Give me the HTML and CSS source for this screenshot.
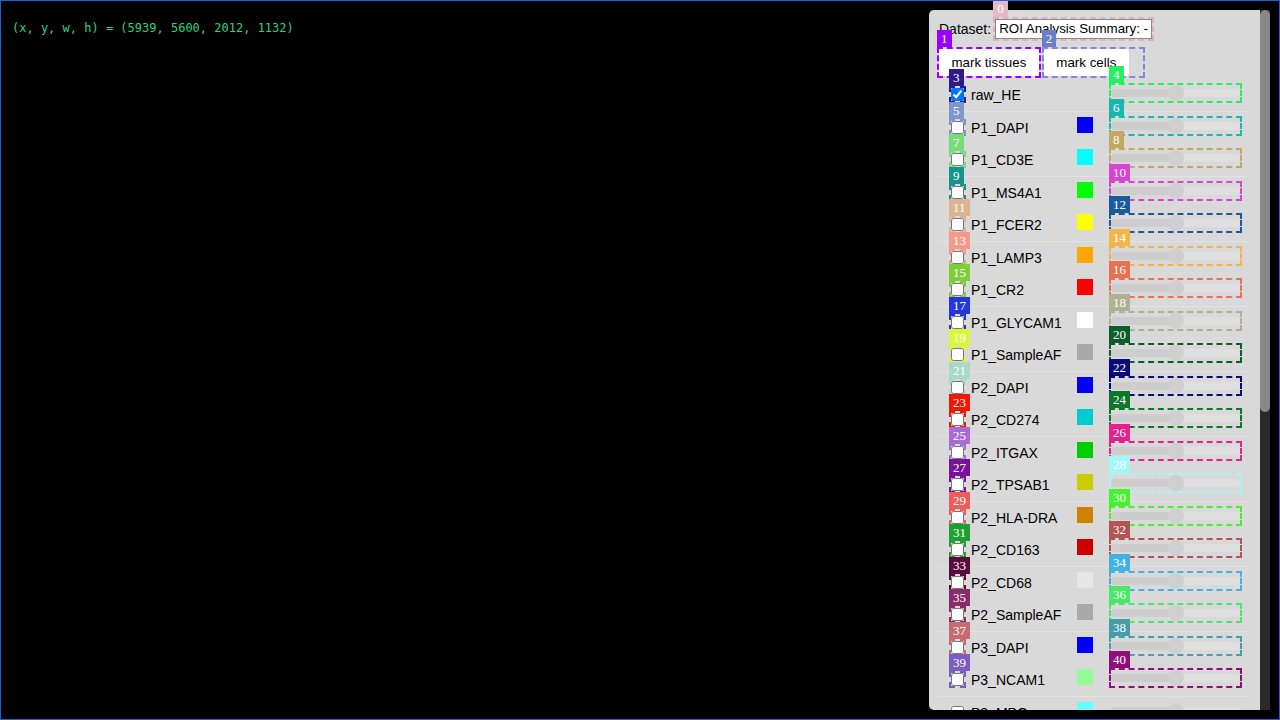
FILE: index.html
```html
<!DOCTYPE html>
<html lang="en">
<head>
<meta charset="utf-8">
<title>ROI viewer</title>
<link rel="stylesheet" href="styles.css">
</head>
<body>
<div class="screen">
  <div class="coords">(x, y, w, h) = (5939, 5600, 2012, 1132)</div>
  <aside class="panel">
    <div class="panel-body">
      <div class="dataset">
        <span class="dataset-label">Dataset:</span>
        <span class="mark" style="--c:#d9b3bf;--t:#e6b8c6"><span class="dataset-value">ROI Analysis Summary: -</span><b class="tag">0</b></span>
      </div>
      <div class="actions">
        <span class="mark" style="--c:#9900ff"><button class="btn">mark tissues</button><b class="tag">1</b></span>
        <span class="mark mark-wide" style="--c:#8c84dc;--t:#6c7ec6"><button class="btn">mark cells</button><b class="tag">2</b></span>
      </div>
      <ul class="channels">
        <li class="channel">
          <label class="name"><span class="mark mark-check" style="--c:#2e1b87"><input type="checkbox" class="check" checked><b class="tag">3</b></span>raw_HE</label>
          <span class="swatch swatch-none"></span>
          <span class="mark mark-range" style="--c:#24f060"><input type="range" class="range" disabled><b class="tag">4</b></span>
        </li>
        <li class="channel">
          <label class="name"><span class="mark mark-check" style="--c:#7f96cc"><input type="checkbox" class="check"><b class="tag">5</b></span>P1_DAPI</label>
          <span class="swatch" style="--s:#0000ff"></span>
          <span class="mark mark-range" style="--c:#1ab6b0"><input type="range" class="range" disabled><b class="tag">6</b></span>
        </li>
        <li class="channel">
          <label class="name"><span class="mark mark-check" style="--c:#74dd7a"><input type="checkbox" class="check"><b class="tag">7</b></span>P1_CD3E</label>
          <span class="swatch" style="--s:#00ffff"></span>
          <span class="mark mark-range" style="--c:#c4a85e"><input type="range" class="range" disabled><b class="tag">8</b></span>
        </li>
        <li class="channel">
          <label class="name"><span class="mark mark-check" style="--c:#15958c"><input type="checkbox" class="check"><b class="tag">9</b></span>P1_MS4A1</label>
          <span class="swatch" style="--s:#00ff00"></span>
          <span class="mark mark-range" style="--c:#d743d3"><input type="range" class="range" disabled><b class="tag">10</b></span>
        </li>
        <li class="channel">
          <label class="name"><span class="mark mark-check" style="--c:#ddb48f"><input type="checkbox" class="check"><b class="tag">11</b></span>P1_FCER2</label>
          <span class="swatch" style="--s:#ffff00"></span>
          <span class="mark mark-range" style="--c:#1c5aa0"><input type="range" class="range" disabled><b class="tag">12</b></span>
        </li>
        <li class="channel">
          <label class="name"><span class="mark mark-check" style="--c:#f5998a"><input type="checkbox" class="check"><b class="tag">13</b></span>P1_LAMP3</label>
          <span class="swatch" style="--s:#ffa500"></span>
          <span class="mark mark-range" style="--c:#f2b54c"><input type="range" class="range" disabled><b class="tag">14</b></span>
        </li>
        <li class="channel">
          <label class="name"><span class="mark mark-check" style="--c:#7dcf38"><input type="checkbox" class="check"><b class="tag">15</b></span>P1_CR2</label>
          <span class="swatch" style="--s:#ff0000"></span>
          <span class="mark mark-range" style="--c:#e8714f"><input type="range" class="range" disabled><b class="tag">16</b></span>
        </li>
        <li class="channel">
          <label class="name"><span class="mark mark-check" style="--c:#2436dc"><input type="checkbox" class="check"><b class="tag">17</b></span>P1_GLYCAM1</label>
          <span class="swatch" style="--s:#ffffff"></span>
          <span class="mark mark-range" style="--c:#b2b093"><input type="range" class="range" disabled><b class="tag">18</b></span>
        </li>
        <li class="channel">
          <label class="name"><span class="mark mark-check" style="--c:#dcf53a"><input type="checkbox" class="check"><b class="tag">19</b></span>P1_SampleAF</label>
          <span class="swatch" style="--s:#a9a9a9"></span>
          <span class="mark mark-range" style="--c:#0b5e2b"><input type="range" class="range" disabled><b class="tag">20</b></span>
        </li>
        <li class="channel">
          <label class="name"><span class="mark mark-check" style="--c:#a9d9c9"><input type="checkbox" class="check"><b class="tag">21</b></span>P2_DAPI</label>
          <span class="swatch" style="--s:#0000ff"></span>
          <span class="mark mark-range" style="--c:#0b0b78"><input type="range" class="range" disabled><b class="tag">22</b></span>
        </li>
        <li class="channel">
          <label class="name"><span class="mark mark-check" style="--c:#f01800"><input type="checkbox" class="check"><b class="tag">23</b></span>P2_CD274</label>
          <span class="swatch" style="--s:#00cccc"></span>
          <span class="mark mark-range" style="--c:#0b782b"><input type="range" class="range" disabled><b class="tag">24</b></span>
        </li>
        <li class="channel">
          <label class="name"><span class="mark mark-check" style="--c:#a86cd6"><input type="checkbox" class="check"><b class="tag">25</b></span>P2_ITGAX</label>
          <span class="swatch" style="--s:#00cc00"></span>
          <span class="mark mark-range" style="--c:#e6208c"><input type="range" class="range" disabled><b class="tag">26</b></span>
        </li>
        <li class="channel">
          <label class="name"><span class="mark mark-check" style="--c:#7b109c"><input type="checkbox" class="check"><b class="tag">27</b></span>P2_TPSAB1</label>
          <span class="swatch" style="--s:#cccc00"></span>
          <span class="mark mark-range" style="--c:#a3f7f7"><input type="range" class="range" disabled><b class="tag">28</b></span>
        </li>
        <li class="channel">
          <label class="name"><span class="mark mark-check" style="--c:#f05c5c"><input type="checkbox" class="check"><b class="tag">29</b></span>P2_HLA-DRA</label>
          <span class="swatch" style="--s:#cc8400"></span>
          <span class="mark mark-range" style="--c:#47f030"><input type="range" class="range" disabled><b class="tag">30</b></span>
        </li>
        <li class="channel">
          <label class="name"><span class="mark mark-check" style="--c:#1f9f2f"><input type="checkbox" class="check"><b class="tag">31</b></span>P2_CD163</label>
          <span class="swatch" style="--s:#cc0000"></span>
          <span class="mark mark-range" style="--c:#b05454"><input type="range" class="range" disabled><b class="tag">32</b></span>
        </li>
        <li class="channel">
          <label class="name"><span class="mark mark-check" style="--c:#5b0b3b"><input type="checkbox" class="check"><b class="tag">33</b></span>P2_CD68</label>
          <span class="swatch" style="--s:#e6e6e6"></span>
          <span class="mark mark-range" style="--c:#42b2e2"><input type="range" class="range" disabled><b class="tag">34</b></span>
        </li>
        <li class="channel">
          <label class="name"><span class="mark mark-check" style="--c:#8b2b6b"><input type="checkbox" class="check"><b class="tag">35</b></span>P2_SampleAF</label>
          <span class="swatch" style="--s:#a9a9a9"></span>
          <span class="mark mark-range" style="--c:#4ae86a"><input type="range" class="range" disabled><b class="tag">36</b></span>
        </li>
        <li class="channel">
          <label class="name"><span class="mark mark-check" style="--c:#c96971"><input type="checkbox" class="check"><b class="tag">37</b></span>P3_DAPI</label>
          <span class="swatch" style="--s:#0000ff"></span>
          <span class="mark mark-range" style="--c:#469fa8"><input type="range" class="range" disabled><b class="tag">38</b></span>
        </li>
        <li class="channel">
          <label class="name"><span class="mark mark-check" style="--c:#7b5cc0"><input type="checkbox" class="check"><b class="tag">39</b></span>P3_NCAM1</label>
          <span class="swatch" style="--s:#98fb98"></span>
          <span class="mark mark-range" style="--c:#910d79"><input type="range" class="range" disabled><b class="tag">40</b></span>
        </li>
        <li class="channel">
          <label class="name"><span class="mark-check plain"><input type="checkbox" class="check"></span>P3_MPO</label>
          <span class="swatch" style="--s:#66ffff"></span>
          <span class="mark-range plain"><input type="range" class="range" disabled></span>
        </li>
      </ul>
    </div>
    <div class="scrollbar"><div class="thumb"></div></div>
  </aside>
</div>
</body>
</html>
```

FILE: styles.css
```css
* { box-sizing: border-box; }

html, body {
  margin: 0;
  background: #000;
}

body {
  font-family: "Liberation Sans", Arial, sans-serif;
}

.screen {
  width: 1280px;
  height: 720px;
  border: 1px solid #1c5fd4;
  padding: 9px 9px 9px 11px;
  display: flex;
  justify-content: space-between;
  align-items: flex-start;
  background: #000;
  overflow: hidden;
}

.coords {
  margin-top: 11px;
  font: 12px/14px "DejaVu Sans Mono", monospace;
  color: #2ad47e;
  white-space: pre;
}

.panel {
  width: 341px;
  height: 700px;
  display: flex;
  background: #d9d9d9;
  border-radius: 5px 0 0 5px;
}

.panel-body {
  flex: 1;
  min-width: 0;
  display: flex;
  flex-direction: column;
  padding: 9px 10px 0;
}

.dataset {
  display: flex;
  align-items: center;
  gap: 4px;
  height: 20px;
  font-size: 14px;
  color: #000;
}

.dataset-value {
  display: block;
  height: 20px;
  border: 1px solid #8a8a8a;
  background: #fff;
  padding: 0 3px;
  font-size: 13.333px;
  line-height: 18px;
  white-space: nowrap;
}

.actions {
  display: flex;
  gap: 5px;
  margin-top: 10px;
}

.btn {
  height: 27px;
  padding: 0 12.5px;
  border: 0;
  border-radius: 3px;
  background: #fff;
  font: 13.333px "Liberation Sans", Arial, sans-serif;
  color: #000;
}

.mark {
  position: relative;
  display: inline-flex;
}

.mark::after {
  content: "";
  position: absolute;
  inset: -2px;
  border: 2px dashed var(--c);
  pointer-events: none;
}

.tag {
  position: absolute;
  left: -2px;
  bottom: calc(100% + 2px);
  padding: 0 4px;
  background: var(--t, var(--c));
  color: #fff;
  font: 400 13px/17px "Liberation Serif", "Times New Roman", serif;
  white-space: nowrap;
  z-index: 1;
}

.mark-wide {
  width: 99px;
}

.channels {
  list-style: none;
  margin: 3px 0 0 -1px;
  padding: 0;
  flex: 1;
  min-height: 0;
  clip-path: inset(-40px -40px 0 -40px);
}

.channel {
  display: flex;
  align-items: center;
  height: 32px;
  padding-left: 13px;
  font-size: 14px;
  color: #000;
}

.channel:nth-child(odd) {
  height: 33px;
  border-bottom: 1px solid #e3e3e3;
}

.name {
  display: flex;
  align-items: center;
  gap: 7px;
  width: 126px;
  white-space: nowrap;
}

.mark-check {
  display: inline-flex;
  margin-bottom: 2px;
}

.check {
  width: 13px;
  height: 13px;
  margin: 0;
}

.swatch {
  width: 16px;
  height: 16px;
  margin: 0 18px 6px 0;
  background: var(--s, transparent);
  flex: none;
}

.mark-range {
  display: inline-flex;
  margin-bottom: 4px;
}

.range {
  -webkit-appearance: none;
  appearance: none;
  width: 129px;
  height: 16px;
  margin: 0;
  background: transparent;
}

.range::-webkit-slider-runnable-track {
  height: 8px;
  border-radius: 4px;
  background: linear-gradient(to right, #cdcdcd 50%, #dfdfdf 50%);
}

.range::-webkit-slider-thumb {
  -webkit-appearance: none;
  appearance: none;
  width: 16px;
  height: 16px;
  margin-top: -4px;
  border-radius: 50%;
  background: #cfcfcf;
}

.scrollbar {
  width: 10px;
  flex: none;
  background: #2a2a2a;
}

.thumb {
  height: 402px;
  border-radius: 5px;
  background: #888;
}
```
